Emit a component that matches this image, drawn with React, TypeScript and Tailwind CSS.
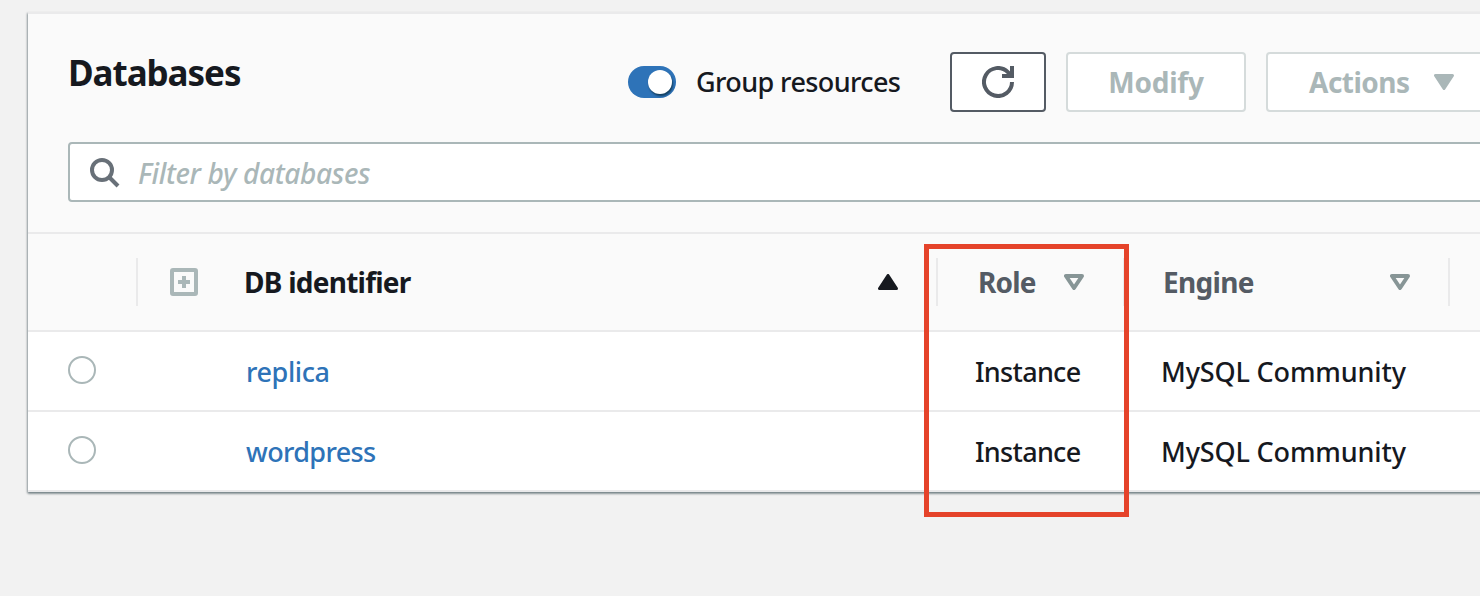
import React from 'react';

const rows = [
  { id: 'replica', role: 'Instance', engine: 'MySQL Community', tracking: 'tracking-[-0.4px]' },
  { id: 'wordpress', role: 'Instance', engine: 'MySQL Community', tracking: 'tracking-[-0.65px]' },
];

function SortTriangle() {
  return (
    <svg width="20" height="16" viewBox="0 0 20 16" className="shrink-0">
      <path d="M2 2H18L10 14Z" fill="none" stroke="#879596" strokeWidth="4" strokeLinejoin="round" />
    </svg>
  );
}

function SolidTriangle({ up = false, color }: { up?: boolean; color: string }) {
  return (
    <svg width="20" height="16" viewBox="0 0 20 16" className="shrink-0">
      <path d={up ? 'M1.5 14.5H18.5L10 1.5Z' : 'M1.5 1.5H18.5L10 14.5Z'} fill={color} stroke={color} strokeWidth="3" strokeLinejoin="round" />
    </svg>
  );
}

function Divider() {
  return <span className="h-12 w-0.5 shrink-0 bg-[#eaeaeb]" />;
}

export default function App() {
  return (
    <div className="relative h-[596px] w-[1480px] overflow-hidden bg-[#f2f2f2] pt-3 pl-7 font-['Noto_Sans','Open_Sans',sans-serif] text-[28px] leading-10 font-medium whitespace-nowrap text-[#16191f]">
      <main className="h-[480px] w-[1500px] border-t-2 border-[#eaeaeb] bg-[#fafafa] shadow-[0_2px_2px_0_rgba(0,28,36,0.35),-1px_1px_2px_0_rgba(0,28,36,0.3)]">
        <header className="flex h-32 pt-[38px] pl-10">
          <h1 className="-mt-px w-[560px] text-[35px] leading-[44px] font-bold tracking-[-1.05px]">Databases</h1>
          <div className="flex h-[60px] items-center">
            <span className="flex h-8 w-12 items-center justify-end rounded-full bg-[#2e73b8] pr-1">
              <span className="size-6 rounded-full bg-white shadow-[1px_2px_2px_rgba(0,28,36,0.6)]" />
            </span>
            <span className="ml-5 w-[254px] text-[27px] tracking-[-0.6px]">Group resources</span>
          </div>
          <button className="flex h-[60px] w-24 items-center justify-center rounded-[4px] border-2 border-[#545b64] bg-white">
            <svg width="32" height="32" viewBox="0 0 32 32" fill="none" stroke="#545b64" strokeWidth="4">
              <path d="M30 16A14 14 0 1 1 25.9 6.1L29 9.5" />
              <path d="M20 10H30V0" />
            </svg>
          </button>
          <button className="ml-5 flex h-[60px] w-[180px] items-center justify-center rounded-[4px] border-2 border-[#d5dbdb] bg-white font-bold tracking-[-0.2px] text-[#aab7b8]">Modify</button>
          <button className="ml-5 flex h-[60px] w-[240px] items-center rounded-[4px] border-2 border-[#d5dbdb] bg-white pl-[41px] font-bold text-[#aab7b8]">
            <span className="w-[125px] text-left tracking-[-0.5px]">Actions</span>
            <SolidTriangle color="#aab7b8" />
          </button>
        </header>
        <div className="ml-10 flex h-[60px] items-center rounded-[4px] border-2 border-[#aab7b8] bg-white pl-5">
          <svg className="translate-y-px" width="30" height="30" viewBox="0 0 30 30" fill="none" stroke="#687078" strokeWidth="4">
            <circle cx="12" cy="12" r="10" />
            <path d="M19 19L28 28" />
          </svg>
          <span className="ml-[18px] translate-y-px tracking-[-0.35px] text-[#aab7b8] italic">Filter by databases</span>
        </div>
        <section className="mt-[30px]">
          <div className="flex h-[100px] items-center border-y-2 border-[#eaeaeb] font-bold">
            <span className="w-[108px]" />
            <Divider />
            <svg className="ml-8 shrink-0" width="28" height="28" viewBox="0 0 28 28" fill="none" stroke="#aab7b8" strokeWidth="4">
              <rect x="2" y="2" width="24" height="24" rx="1" />
              <path d="M8 14H20M14 8V20" />
            </svg>
            <span className="ml-[46px] w-[634px] tracking-[-0.75px]">DB identifier</span>
            <SolidTriangle up color="#16191f" />
            <span className="ml-[38px] flex"><Divider /></span>
            <span className="ml-10 w-[86px] tracking-[-0.8px] text-[#545b64]">Role</span>
            <SortTriangle />
            <span className="ml-[39px] flex"><Divider /></span>
            <span className="ml-[38px] w-[227px] tracking-[-0.7px] text-[#545b64]">Engine</span>
            <SortTriangle />
            <span className="ml-[38px] flex"><Divider /></span>
          </div>
          {rows.map((row) => (
            <div key={row.id} className="flex h-20 items-center border-b-2 border-[#eaeaeb] bg-white pl-10 text-[27px]">
              <span className="size-7 -translate-y-px rounded-full border-2 border-[#aab7b8]" />
              <a className={`ml-[150px] w-[729px] translate-y-px text-[#2e73b8] ${row.tracking}`}>{row.id}</a>
              <span className="w-[186px] translate-y-px tracking-[-0.7px]">{row.role}</span>
              <span className="translate-y-px tracking-[-0.15px]">{row.engine}</span>
            </div>
          ))}
        </section>
      </main>
      <div className="absolute top-[244px] left-[924px] h-[273px] w-[205px] border-[5px] border-[#e5432a]" />
    </div>
  );
}
